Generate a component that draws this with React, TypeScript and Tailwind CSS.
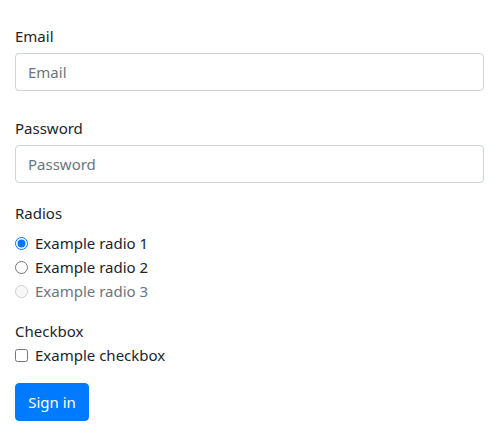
export default function App() {
  return (
    <div
      className="px-[15px] pt-[24px] text-[15px] leading-[24px] text-[#212529]"
      style={{ fontFamily: '"Segoe UI", "Noto Sans", sans-serif' }}
    >
      <form className="flex flex-col" onSubmit={(e) => e.preventDefault()}>
        <label htmlFor="email" className="block h-[24px]">
          Email
        </label>
        <input
          id="email"
          type="email"
          placeholder="Email"
          className="mt-[5px] h-[38px] w-full rounded-[4px] border border-[#ced4da] bg-white px-[12px] text-[15px] text-[#495057] outline-none placeholder:text-[#6c757d]"
        />

        <label htmlFor="password" className="mt-[25px] block h-[24px]">
          Password
        </label>
        <input
          id="password"
          type="password"
          placeholder="Password"
          className="mt-[5px] h-[38px] w-full rounded-[4px] border border-[#ced4da] bg-white px-[12px] text-[15px] text-[#495057] outline-none placeholder:text-[#6c757d]"
        />

        <div className="mt-[18px] h-[24px]">Radios</div>
        <div className="mt-[6px] flex flex-col">
          <label className="flex h-[24px] items-center gap-[7px]">
            <input type="radio" name="r" defaultChecked className="m-0 h-[13px] w-[13px]" />
            Example radio 1
          </label>
          <label className="flex h-[24px] items-center gap-[7px]">
            <input type="radio" name="r" className="m-0 h-[13px] w-[13px]" />
            Example radio 2
          </label>
          <label className="flex h-[24px] items-center gap-[7px] text-[#6c757d]">
            <input type="radio" name="r" disabled className="m-0 h-[13px] w-[13px]" />
            Example radio 3
          </label>
        </div>

        <div className="mt-[16px] h-[24px]">Checkbox</div>
        <label className="flex h-[24px] items-center gap-[7px]">
          <input type="checkbox" className="m-0 h-[13px] w-[13px]" />
          Example checkbox
        </label>

        <div className="mt-[16px]">
          <button
            type="submit"
            className="h-[38px] w-[74px] rounded-[4px] border border-[#007bff] bg-[#007bff] text-[15px] text-white"
          >
            Sign in
          </button>
        </div>
      </form>
    </div>
  );
}
